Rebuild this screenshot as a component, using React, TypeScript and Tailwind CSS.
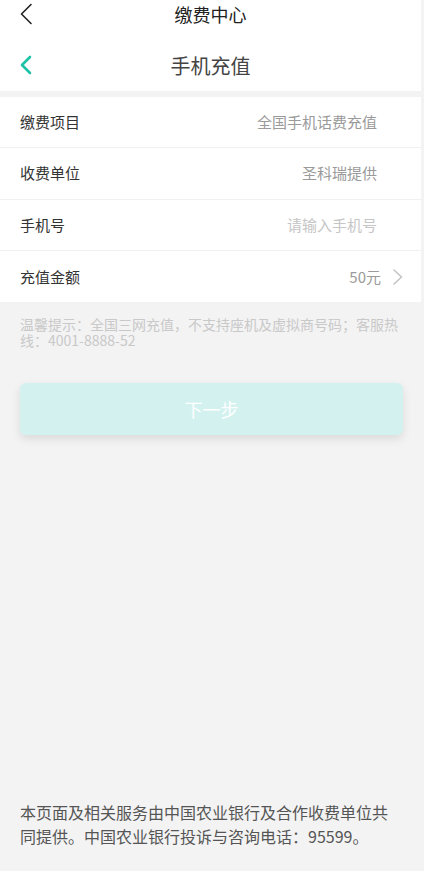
import React from "react";

const font = { fontFamily: '"Noto Sans CJK SC", "Noto Sans", sans-serif' };

function Row({ label, value, valueClass, chevron, last }: { label: string; value: string; valueClass: string; chevron?: boolean; last?: boolean }) {
  return (
    <div className={`flex h-[51.3px] items-center pl-[20px] ${chevron ? "pr-[17px]" : "pr-[44px]"} ${last ? "" : "border-b border-[#f1f1f1]"}`}>
      <span className="text-[15px] leading-[20px] text-[#333333]">{label}</span>
      <span className={`ml-auto text-[15px] leading-[20px] ${valueClass}`}>{value}</span>
      {chevron && (
        <svg width="12" height="18" viewBox="0 0 12 18" className="ml-[11px]">
          <path d="M2 2 L9.5 9 L2 16" fill="none" stroke="#c4c4c4" strokeWidth="1.6" strokeLinecap="round" strokeLinejoin="round" />
        </svg>
      )}
    </div>
  );
}

export default function App() {
  return (
    <div className="flex h-[871px] w-[424px] flex-col bg-[#f3f3f3]" style={font}>
      <div className="w-[421px] bg-white">
        <div className="relative flex h-[40px] items-start justify-center pt-[3px]">
          <svg width="14" height="22" viewBox="0 0 14 22" className="absolute left-[19px] top-[3px]">
            <path d="M12 1.5 L2.5 11 L12 20.5" fill="none" stroke="#222222" strokeWidth="1.6" strokeLinecap="round" strokeLinejoin="round" />
          </svg>
          <span className="text-[18px] leading-[22px] text-[#222222]">缴费中心</span>
        </div>
        <div className="relative flex h-[51px] items-center justify-center">
          <svg width="14" height="20" viewBox="0 0 14 20" className="absolute left-[19px] top-[15px]">
            <path d="M11 2 L3 10 L11 18" fill="none" stroke="#1cc3a6" strokeWidth="2.6" strokeLinecap="round" strokeLinejoin="round" />
          </svg>
          <span className="text-[20px] leading-[26px] text-[#444444]">手机充值</span>
        </div>
      </div>
      <div className="mt-[6px] w-[421px] bg-white">
        <Row label="缴费项目" value="全国手机话费充值" valueClass="text-[#9a9a9a]" />
        <Row label="收费单位" value="圣科瑞提供" valueClass="text-[#9a9a9a]" />
        <Row label="手机号" value="请输入手机号" valueClass="text-[#c6c6c6]" />
        <Row label="充值金额" value="50元" valueClass="text-[#9a9a9a]" chevron last />
      </div>
      <p className="w-[421px] px-[20px] pt-[14px] text-[14px] leading-[16px] text-[#c9c9c9]">
        温馨提示：全国三网充值，不支持座机及虚拟商号码；客服热线：4001-8888-52
      </p>
      <div className="mt-[35px] px-[20px]">
        <div className="flex h-[52px] w-[383px] items-center justify-center rounded-[6px] bg-[#d3f2ef] shadow-[0_4px_10px_rgba(0,0,0,0.10)]">
          <span className="text-[18px] leading-[24px] text-white">下一步</span>
        </div>
      </div>
      <div className="flex-1" />
      <p className="w-[421px] px-[20px] pb-[23px] text-[16px] leading-[24px] text-[#555555]">
        本页面及相关服务由中国农业银行及合作收费单位共同提供。中国农业银行投诉与咨询电话：95599。
      </p>
    </div>
  );
}
